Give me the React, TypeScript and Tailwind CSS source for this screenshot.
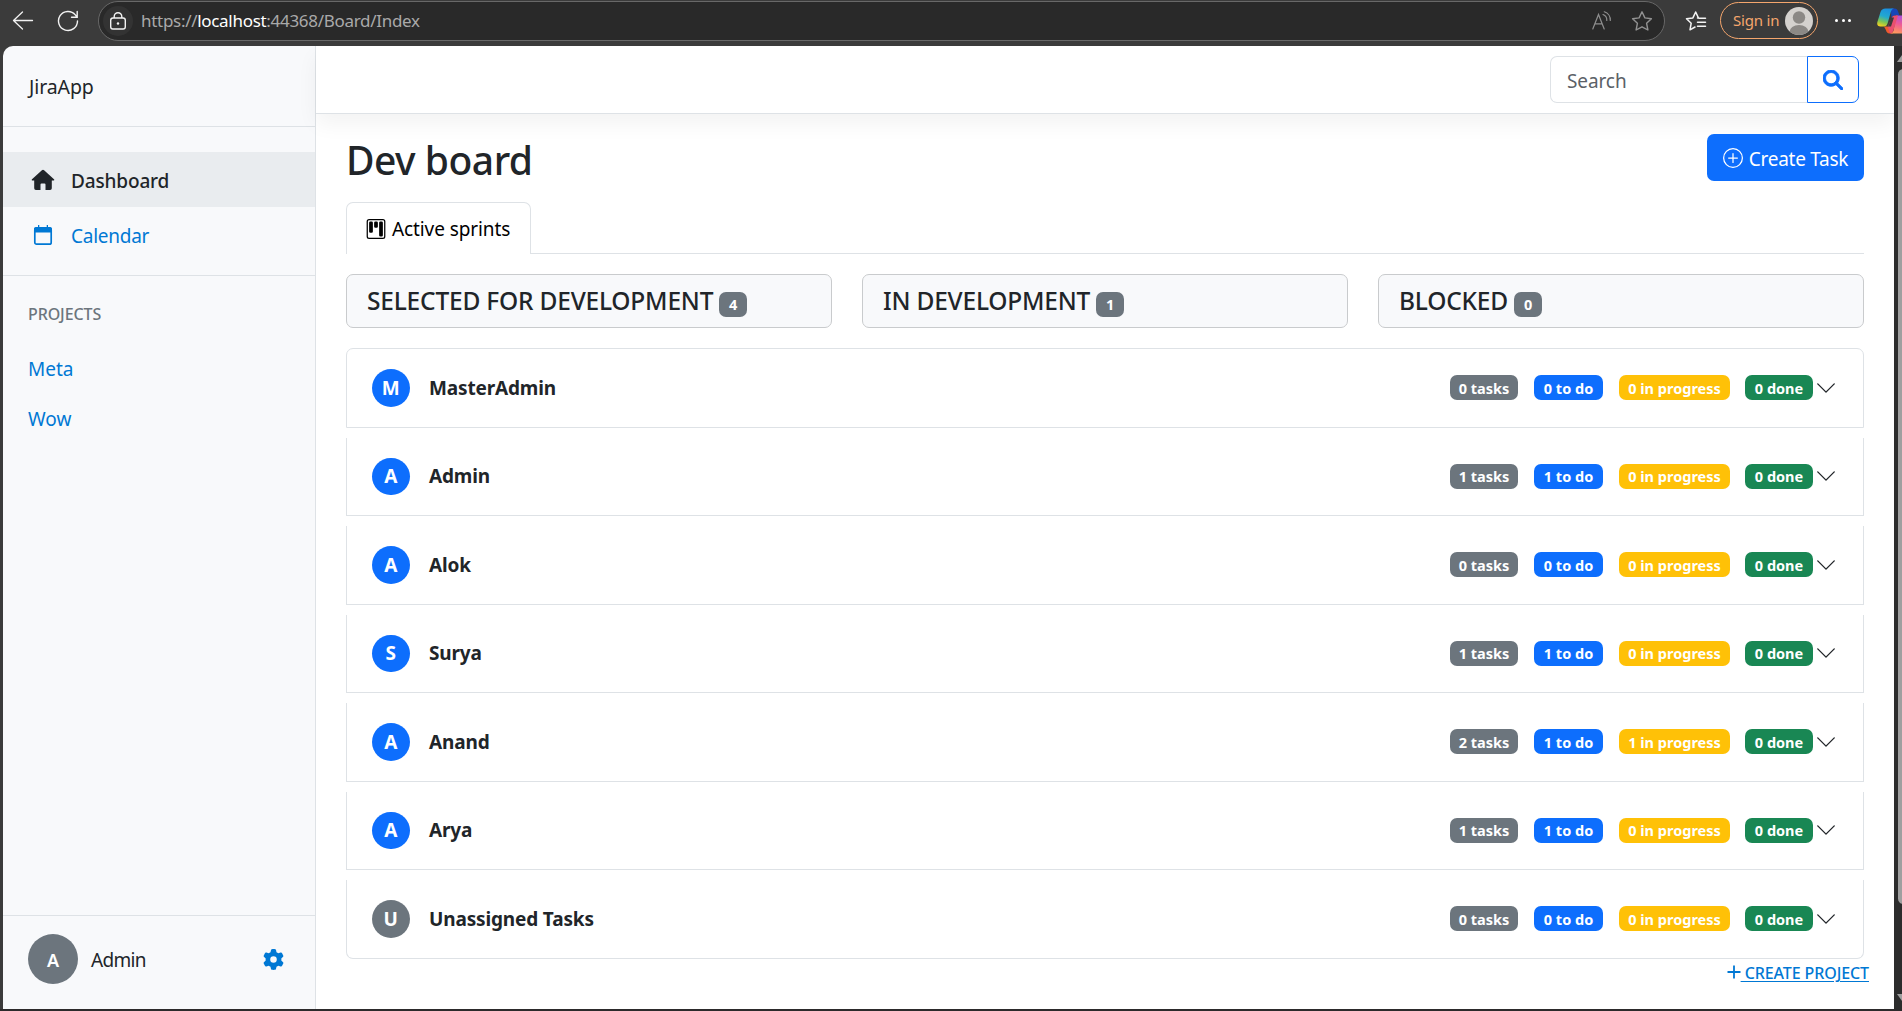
import React from "react";
import { BsChevronDown, BsKanban, BsPlusCircle } from "react-icons/bs";
import { FaGear, FaMagnifyingGlass } from "react-icons/fa6";

const columns = [
  { name: "SELECTED FOR DEVELOPMENT", count: 4 },
  { name: "IN DEVELOPMENT", count: 1 },
  { name: "BLOCKED", count: 0 },
];

const people = [
  { name: "MasterAdmin", tasks: 0, todo: 0, progress: 0, done: 0 },
  { name: "Admin", tasks: 1, todo: 1, progress: 0, done: 0 },
  { name: "Alok", tasks: 0, todo: 0, progress: 0, done: 0 },
  { name: "Surya", tasks: 1, todo: 1, progress: 0, done: 0 },
  { name: "Anand", tasks: 2, todo: 1, progress: 1, done: 0 },
  { name: "Arya", tasks: 1, todo: 1, progress: 0, done: 0 },
  { name: "Unassigned Tasks", tasks: 0, todo: 0, progress: 0, done: 0 },
];

function BrowserBar() {
  return (
    <div className="flex h-[46px] shrink-0 items-start overflow-hidden bg-[#3b3b3b]">
      <svg className="ml-3 mt-[11px] h-5 w-[22px] shrink-0" viewBox="0 0 22 20" fill="none" stroke="#f2f2f2" strokeWidth="1.3" strokeLinecap="round" strokeLinejoin="round">
        <path d="M20.5 9.5H1.5M10.5 1L1.500 9.500L10.500 18" />
      </svg>
      <svg className="ml-[23px] mt-[10px] h-[22px] w-[22px] shrink-0" viewBox="0 0 22 22" fill="none" stroke="#f2f2f2" strokeWidth="1.4" strokeLinecap="round">
        <path d="M20.500 11a9.500 9.500 0 1 1-2.200-6.100L20 7M20.200 1.500V7.200H14.500" />
      </svg>
      <div className="ml-[19px] mt-px flex h-10 w-[1567px] shrink-0 items-center rounded-full border border-[#686868] bg-[#292929]">
        <div className="ml-1 flex h-[30px] w-[30px] items-center justify-center rounded-full bg-[#333333]">
          <svg className="h-[18px] w-[18px]" viewBox="0 0 18 18" fill="none" stroke="#f2f2f2" strokeWidth="1.4">
            <rect x="1.700" y="6" width="14.600" height="11" rx="2.200" />
            <path d="M5.200 6V4.500a3.800 3.800 0 0 1 7.600 0V6" />
            <circle cx="9" cy="11.500" r="1.200" fill="#f2f2f2" stroke="none" />
          </svg>
        </div>
        <div className="ml-2 grow pb-0.5 text-[17px] leading-none tracking-[-0.3px] text-[#a9a9a9]">
          https://<span className="text-white">localhost</span>:44368/Board/Index
        </div>
        <svg className="mr-[19px] h-5 w-5" viewBox="0 0 20 20" fill="none" stroke="#8f8f8f" strokeWidth="1.2" strokeLinecap="round">
          <path d="M0.800 18L6.500 3.500L12.200 18M2.900 12.800H10.100" />
          <path d="M11 3.500a6 6 0 0 1 3.800 6M12.300 0.800a8.500 8.500 0 0 1 6 8.700" />
        </svg>
        <svg className="mr-[11px] h-[22px] w-[22px]" viewBox="0 0 22 22" fill="none" stroke="#929292" strokeWidth="1.4" strokeLinejoin="round">
          <path d="M11 1.800L13.900 7.900L20.400 8.700L15.600 13.300L16.900 20L11 16.800L5.100 20L6.400 13.300L1.600 8.700L8.100 7.900Z" />
        </svg>
      </div>
      <svg className="ml-[20px] mt-[10px] h-[22px] w-[22px] shrink-0" viewBox="0 0 22 22" fill="none" stroke="#f4f4f4" strokeWidth="1.5" strokeLinejoin="round" strokeLinecap="round">
        <path d="M12.500 7.900H13.400L10.700 2L7.900 7.900L1.500 8.700L6.200 13.200L5 19.800L10 17" />
        <path d="M14 8.200H20.500M12.500 12.200H20.500M12.500 16.200H20.500" />
      </svg>
      <div className="ml-[13px] mt-0.5 flex h-[37px] w-[98px] shrink-0 items-center rounded-full border border-[#f5a66d]">
        <span className="ml-3 w-[52px] whitespace-nowrap text-[15px] leading-none tracking-[-0.2px] text-[#f5a66d]">Sign in</span>
        <svg className="h-7 w-7 shrink-0" viewBox="0 0 28 28">
          <defs>
            <clipPath id="avatar"><circle cx="14" cy="14" r="14" /></clipPath>
          </defs>
          <g clipPath="url(#avatar)">
            <rect width="28" height="28" fill="#d4d1ce" />
            <circle cx="14" cy="10.5" r="6.2" fill="#8b8885" />
            <ellipse cx="14" cy="25" rx="9.5" ry="7" fill="#8b8885" />
          </g>
        </svg>
      </div>
      <div className="ml-[17px] mt-[19px] flex w-4 shrink-0 justify-between">
        <i className="h-[3px] w-[3px] rounded-full bg-white" />
        <i className="h-[3px] w-[3px] rounded-full bg-white" />
        <i className="h-[3px] w-[3px] rounded-full bg-white" />
      </div>
      <svg className="ml-[26px] mt-2 h-[26px] w-[34px] shrink-0" viewBox="0 0 34 26">
        <defs>
          <linearGradient id="cool" x1="0.6" y1="0" x2="0.3" y2="1">
            <stop offset="0" stopColor="#1b8fe0" />
            <stop offset="0.45" stopColor="#22a9d0" />
            <stop offset="0.75" stopColor="#7cc455" />
            <stop offset="1" stopColor="#f0d020" />
          </linearGradient>
          <linearGradient id="warm" x1="0.6" y1="0" x2="0.3" y2="1">
            <stop offset="0" stopColor="#a94fe0" />
            <stop offset="0.5" stopColor="#ef5c93" />
            <stop offset="1" stopColor="#ff9a5c" />
          </linearGradient>
        </defs>
        <path d="M14 0.500h3.500c2 0 3 1.200 3.600 3l1.400 4H18c-2 0-3 1-3.600 3z" fill="#1746b8" />
        <path d="M7 18.500h6l3 7H12.500c-2 0-3-1.500-3.600-3.500z" fill="#ef5a2c" />
        <path d="M8.500 0.500H17c-1.600.3-2.600 1.500-3.200 3.500L10.700 15c-.8 2.500-1.700 3.500-4.200 3.500H3.500C.8 18.500-.3 16.800.4 14L3.500 4C4.200 1.700 6 .5 8.500.5z" fill="url(#cool)" />
        <path d="M19 7.500H30c2.500 0 3.300 2 2.600 4.500L30 21.500c-.7 2.500-2.500 4-5 4H13.500c1.800-.3 2.600-1.500 3.200-3.500z" fill="url(#warm)" />
        <path d="M14.400 10.500C15 8.500 16 7.500 18 7.500h3L16.500 22c-.5 1.800-1.300 3.200-2.800 3.500-1-.5-1.500-1.500-2-3.500l-.7-3.500z" fill="#e9506e" />
        <path d="M14 9.500h3l-3 9h-3.500c1-.5 1.300-1.500 1.600-2.500z" fill="#3b3b3b" />
      </svg>
    </div>
  );
}

function HomeIcon() {
  return (
    <svg className="h-[22px] w-6" viewBox="0 0 24 22" fill="#212529">
      <path d="M10.900 1.300a1.600 1.600 0 0 1 2.200 0L23 10.200c.6.6.3 1.300-.5 1.300H20.800V19.300a1.700 1.700 0 0 1-1.700 1.700H14.500V15.500a1 1 0 0 0-1-1H10.500a1 1 0 0 0-1 1V21H4.900a1.700 1.700 0 0 1-1.700-1.700V11.500H1.500c-.8 0-1.100-.7-.5-1.300Z" />
    </svg>
  );
}

function CalendarIcon() {
  return (
    <svg className="h-[22px] w-6" viewBox="0 0 24 22">
      <rect x="3.800" y="4" width="16.400" height="16.200" rx="1.800" fill="none" stroke="#0078d4" strokeWidth="1.700" />
      <path d="M3 8.500V5c0-1.200.8-1.900 1.900-1.900H19.100C20.200 3.100 21 3.800 21 5V8.500ZM7 1h1.300v3H7ZM15.700 1H17v3H15.700Z" fill="#0078d4" />
    </svg>
  );
}

function Sidebar() {
  return (
    <aside className="flex w-[313px] shrink-0 flex-col border-r border-[#dee2e6] bg-[#f8f9fb] text-[19px] leading-none">
      <div className="flex h-[81px] items-center border-b border-[#dee2e6] pl-[26px] pt-0.5 text-[19.5px] tracking-[-0.1px] text-[#212529]">JiraApp</div>
      <nav className="flex h-[149px] flex-col border-b border-[#dee2e6] pt-[25px]">
        <a className="flex h-[55px] items-center bg-[#e9ecef] pl-7 font-medium tracking-[-0.15px] text-[#212529]">
          <HomeIcon />
          <span className="ml-4 pt-1">Dashboard</span>
        </a>
        <a className="flex h-[55px] items-center pl-7 text-[#0078d4]">
          <CalendarIcon />
          <span className="ml-4 pt-1 tracking-[-0.25px]">Calendar</span>
        </a>
      </nav>
      <div className="grow pl-[25px]">
        <h6 className="mt-[30px] text-[16px] font-medium tracking-[-0.1px] text-[#6c757d]">PROJECTS</h6>
        <div className="mt-[22px] flex flex-col text-[#0078d4]">
          <a className="flex h-[50px] items-center">Meta</a>
          <a className="flex h-[50px] items-center">Wow</a>
        </div>
      </div>
      <div className="flex h-[94px] items-start border-t border-[#dee2e6] pl-[25px] pt-[18px]">
        <div className="flex h-[50px] w-[50px] items-center justify-center rounded-full bg-[#6c757d] pt-0.5 text-[18px] font-semibold text-white">A</div>
        <span className="ml-[13px] flex h-[50px] grow items-center pt-0.5 tracking-[-0.7px] text-[#212529]">Admin</span>
        <FaGear className="mr-[31px] mt-[15px] h-[21px] w-[21px] text-[#0078d4]" />
      </div>
    </aside>
  );
}

function Badge({ className, children }: { className: string; children: React.ReactNode }) {
  return (
    <span className={`flex h-[25px] items-center justify-center whitespace-nowrap rounded-[7px] text-[14.5px] font-bold leading-none text-white ${className}`}>
      {children}
    </span>
  );
}

function PersonRow({ person, index }: { person: (typeof people)[number]; index: number }) {
  const first = index === 0;
  const last = index === people.length - 1;
  return (
    <div
      className={`flex items-center border-x border-b border-[#dee2e6] pl-[25px] pr-[26px] ${
        first ? "h-[79.5px] rounded-t-[7px] border-t" : "mt-[10px] h-[78.5px]"
      } ${last ? "rounded-b-[7px]" : ""}`}
    >
      <div className={`flex h-[37.5px] w-[37.5px] items-center justify-center rounded-full pt-px text-[19px] font-bold leading-none text-white ${last ? "bg-[#6c757d]" : "bg-[#0d6efd]"}`}>
        {person.name[0]}
      </div>
      <span className="ml-[19.5px] grow pt-px text-[19px] font-bold leading-none tracking-[-0.15px] text-[#212529]">{person.name}</span>
      <Badge className="mr-4 w-[68px] bg-[#6c757d]">{person.tasks} tasks</Badge>
      <Badge className="mr-4 w-[69px] bg-[#0d6efd]">{person.todo} to do</Badge>
      <Badge className="mr-[15px] w-[111px] bg-[#ffc107]">{person.progress} in progress</Badge>
      <Badge className="mr-0.5 w-[68px] bg-[#198754]">{person.done} done</Badge>
      <BsChevronDown className="h-[22px] w-[22px] text-[#212529]" />
    </div>
  );
}

function Scrollbar() {
  return (
    <div className="flex w-2 shrink-0 flex-col overflow-hidden bg-[#2c2c2c] pl-[3px]">
      <svg className="mt-[7px] h-[9px] w-[13px] shrink-0" viewBox="0 0 13 9" fill="#9f9f9f"><path d="M6.500 0L13 9H0Z" /></svg>
      <div className="ml-px mt-[7px] h-[835px] w-[11px] shrink-0 rounded-full bg-[#9f9f9f]" />
      <svg className="mt-[90px] h-[9px] w-[13px] shrink-0" viewBox="0 0 13 9" fill="#9f9f9f"><path d="M0 0H13L6.500 9Z" /></svg>
    </div>
  );
}

function Board() {
  return (
    <main className="flex min-w-0 grow flex-col bg-white">
      <header className="flex h-[68px] shrink-0 items-start justify-end border-b border-[#dee2e6] pr-[35px] pt-[10px] shadow-[0_10px_20px_rgba(0,0,0,0.05)]">
        <div className="flex h-[47px] w-[257px] items-center rounded-l-[7px] border border-r-0 border-[#dee2e6] pl-4 pt-1 text-[19px] leading-none tracking-[-0.1px] text-[#5b6167]">
          Search
        </div>
        <button className="flex h-[47px] w-[52px] items-center justify-center rounded-r-[7px] border border-[#0d6efd]">
          <FaMagnifyingGlass className="h-5 w-5 text-[#0d6efd]" stroke="currentColor" strokeWidth="22" />
        </button>
      </header>
      <section className="flex flex-col pl-[30px] pr-[30px]">
        <div className="mt-5 flex h-[47px] items-center justify-between">
          <h1 className="pt-[3px] text-[39px] font-[550] leading-none tracking-[-0.5px] text-[#212529]">Dev board</h1>
          <button className="flex h-[47px] w-[157px] items-center justify-center rounded-[7px] bg-[#0d6efd] text-[19px] leading-none text-white">
            <BsPlusCircle className="mr-[6px] h-5 w-5" />
            <span className="whitespace-nowrap pt-1 tracking-[-0.25px]">Create Task</span>
          </button>
        </div>
        <div className="mt-[21px] flex h-[52px]">
          <div className="flex w-[185px] items-center rounded-t-[7px] border border-b-0 border-[#dee2e6] pl-[19px] text-[19px] leading-none text-black">
            <BsKanban className="mr-[6px] h-5 w-5" />
            <span className="whitespace-nowrap pt-0.5 tracking-[-0.1px]">Active sprints</span>
          </div>
          <div className="grow border-b border-[#dee2e6]" />
        </div>
        <div className="mt-5 grid h-[54px] grid-cols-3 gap-[30px]">
          {columns.map((c) => (
            <div key={c.name} className="flex items-center rounded-[7px] border border-[#c9cbcd] bg-[#f8f9fb] pl-5">
              <h5 className="whitespace-nowrap text-[24.5px] font-medium leading-none tracking-[-0.2px] text-[#212529]">{c.name}</h5>
              <Badge className="ml-[6px] mt-[7px] w-7 bg-[#6c757d]">{c.count}</Badge>
            </div>
          ))}
        </div>
        <div className="mt-5 flex flex-col">
          {people.map((p, i) => (
            <PersonRow key={p.name} person={p} index={i} />
          ))}
        </div>
        <a className="-mr-[5px] mt-1 flex items-center self-end text-[16px] font-medium leading-none text-[#0078d4]">
          <svg className="h-[14px] w-[14px]" viewBox="0 0 14 14" stroke="#0078d4" strokeWidth="1.8"><path d="M7 0.500V13.500M0.500 7H13.500" /></svg>
          <span className="whitespace-pre pt-0.5 tracking-[-0.1px] underline decoration-1 underline-offset-2"> CREATE PROJECT</span>
        </a>
      </section>
    </main>
  );
}

export default function App() {
  return (
    <div className="flex h-[1011px] w-[1902px] flex-col overflow-hidden bg-[#3b3b3b] font-['Noto_Sans',sans-serif]">
      <BrowserBar />
      <div className="flex h-[963px] pl-[3px]">
        <div className="flex min-w-0 grow overflow-hidden rounded-tl-[10px]">
          <Sidebar />
          <Board />
        </div>
        <Scrollbar />
      </div>
      <div className="h-0.5 bg-[#2c2a2b]" />
    </div>
  );
}
